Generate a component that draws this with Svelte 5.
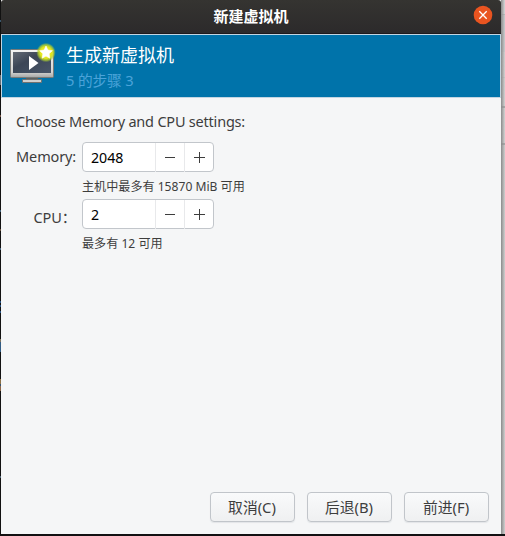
<script lang="ts">
  interface Field {
    id: string
    label: string
    value: number
    hint: string
  }

  let fields: Field[] = $state([
    { id: 'memory', label: 'Memory:', value: 2048, hint: '主机中最多有 15870 MiB 可用' },
    { id: 'cpu', label: 'CPU：', value: 2, hint: '最多有 12 可用' }
  ])

  const actions = ['取消(C)', '后退(B)', '前进(F)']

  function step(field: Field, amount: number): void {
    field.value = Math.max(1, field.value + amount)
  }
</script>

<div class="desktop">
  <div class="edge"></div>
  <div class="window">
    <div class="titlebar">
      <span></span>
      <span class="title">新建虚拟机</span>
      <button class="close" aria-label="Close">
        <svg width="20" height="20" viewBox="0 0 20 20">
          <circle cx="10" cy="10" r="9.3" fill="#e95420" />
          <path d="M6.3 6.3L13.7 13.7M13.7 6.3L6.3 13.7" stroke="#fff" stroke-width="1.3" />
        </svg>
      </button>
    </div>

    <header class="banner">
      <svg class="monitor" width="48" height="48" viewBox="0 0 48 48">
        <defs>
          <linearGradient id="bezel" x1="0" y1="0" x2="0" y2="1">
            <stop offset="0" stop-color="#f4f4f3" />
            <stop offset="0.8" stop-color="#d4d4d2" />
            <stop offset="1" stop-color="#a5a6a5" />
          </linearGradient>
          <linearGradient id="screen" x1="0" y1="0" x2="1" y2="1">
            <stop offset="0" stop-color="#646b76" />
            <stop offset="0.4" stop-color="#3c4656" />
            <stop offset="1" stop-color="#485568" />
          </linearGradient>
          <radialGradient id="glow">
            <stop offset="0" stop-color="#f6f33a" />
            <stop offset="0.6" stop-color="#e0e51c" />
            <stop offset="0.8" stop-color="#b5d22a" stop-opacity="0.75" />
            <stop offset="1" stop-color="#8cbe42" stop-opacity="0" />
          </radialGradient>
        </defs>
        <path d="M18 35H30V40H18Z" fill="#5e605f" />
        <rect x="14.5" y="37.5" width="19" height="3" rx="0.5" fill="#cfcfcd" stroke="#70716f" />
        <rect x="2.5" y="7.5" width="43" height="28" rx="1" fill="url(#bezel)" stroke="#777977" />
        <rect x="5" y="10" width="38" height="21" fill="url(#screen)" />
        <path d="M21 14L30.5 21L21 28Z" fill="#fff" />
        <circle cx="38" cy="10.5" r="9.8" fill="url(#glow)" />
        <path d="M38 4L39.9 8.1L44.3 8.7L41.1 11.8L41.9 16.2L38 14.1L34.1 16.2L34.9 11.8L31.7 8.7L36.1 8.1Z" fill="#fff" stroke="#fff" stroke-width="0.6" />
      </svg>
      <div class="heading">
        <div class="main">生成新虚拟机</div>
        <div class="sub">5 的步骤 3</div>
      </div>
    </header>

    <main>
      <p class="prompt">Choose Memory and CPU settings:</p>
      <div class="form">
        {#each fields as field (field.id)}
          <span class="label {field.id}">{field.label}</span>
          <div class="spin">
            <span class="value">{field.value}</span>
            <button aria-label="Decrease" onclick={() => step(field, -1)}>
              <svg width="12" height="12" viewBox="0 0 12 12"><path d="M1 5.5H11" stroke="#3d3d3d" /></svg>
            </button>
            <button aria-label="Increase" onclick={() => step(field, 1)}>
              <svg width="12" height="12" viewBox="0 0 12 12"><path d="M1 5.5H12M6.5 0V11" stroke="#3d3d3d" /></svg>
            </button>
          </div>
          <span class="hint {field.id}">{field.hint}</span>
        {/each}
      </div>
    </main>

    <footer>
      {#each actions as action}
        <button class="action">{action}</button>
      {/each}
    </footer>
  </div>
  <div class="behind"></div>
</div>

<style>
  :global(body) {
    margin: 0;
    background: #111;
  }

  .desktop {
    display: grid;
    grid-template-columns: 1px 500px 4px;
    width: 505px;
    height: 536px;
    overflow: hidden;
    background: #121112;
    font-family: 'Noto Sans', 'Noto Sans CJK SC', sans-serif;
    font-size: 14.5px;
    color: #3d3d3d;
  }

  button {
    padding: 0;
    border: none;
    background: none;
    font: inherit;
    color: inherit;
  }

  .edge {
    background: linear-gradient(
      #111 20px, #39566c 20px 22px, #111 22px 75px, #687078 75px 85px, #111 85px 115px,
      #765446 115px 117px, #111 117px 210px, #426077 210px 212px, #111 212px 229px,
      #66503f 229px 231px, #111 231px 248px, #46617a 248px 250px, #111 250px 301px,
      #244f80 301px 303px, #111 303px 305px, #244f80 305px 307px, #111 307px 311px,
      #244f80 311px 313px, #111 313px 339px, #7c7461 339px 342px, #315b83 342px 352px,
      #111 352px 379px, #8c7046 379px 384px, #36516c 384px 386px, #8b6548 386px 391px,
      #111 391px 476px, #4b6070 476px 478px, #111 478px
    );
  }

  .window {
    display: flex;
    flex-direction: column;
    height: 534px;
    background: #f5f6f7;
  }

  .titlebar {
    display: grid;
    grid-template-columns: 1fr auto 1fr;
    align-items: center;
    box-sizing: border-box;
    height: 34px;
    padding: 0 8px 3px;
    border-bottom: 1px solid #1d1a1d;
    border-radius: 3px 3px 0 0;
    background: linear-gradient(#353431, #2c2a2b);
  }

  .title {
    padding-top: 1px;
    font-size: 15px;
    line-height: 20px;
    font-weight: 700;
    color: #fff;
  }

  .close {
    justify-self: end;
    width: 20px;
    height: 20px;
  }

  .close svg {
    display: block;
  }

  /* ── Wizard banner ── */

  .banner {
    display: flex;
    box-sizing: border-box;
    height: 64px;
    padding-left: 6px;
    border: 1px solid #c2d5e2;
    background: #0073aa;
  }

  .monitor {
    margin-top: 7px;
  }

  .heading {
    margin-left: 10px;
    padding-top: 8px;
  }

  .main {
    font-size: 18px;
    line-height: 24px;
    color: #fff;
  }

  .sub {
    margin-top: 1px;
    font-size: 14.7px;
    letter-spacing: -0.15px;
    line-height: 24px;
    color: #4ba3d9;
  }

  /* ── Settings form ── */

  main {
    flex: 1;
    padding: 13px 15px 0;
  }

  .prompt {
    margin: 0 0 11px;
    letter-spacing: -0.21px;
    line-height: 20px;
    white-space: nowrap;
  }

  .form {
    display: grid;
    grid-template-columns: 60px 132px;
    grid-template-rows: 30px 27px 30px 27px;
    column-gap: 6px;
  }

  .label {
    justify-self: end;
    letter-spacing: -0.15px;
    line-height: 29px;
    white-space: nowrap;
  }

  .label.cpu {
    padding-top: 4px;
  }

  .spin {
    display: grid;
    grid-template-columns: 1fr 29px 29px;
    box-sizing: border-box;
    height: 30px;
    border: 1px solid #c2c6cb;
    border-radius: 4px;
    background: #fff;
  }

  .value {
    padding-left: 8px;
    font-size: 14.2px;
    line-height: 29px;
    color: #000;
  }

  .spin button {
    display: flex;
    align-items: center;
    justify-content: center;
    border-left: 1px solid #e8e9eb;
  }

  .hint {
    grid-column: 2;
    font-size: 12.1px;
    line-height: 30px;
    white-space: nowrap;
  }

  /* ── Buttons ── */

  footer {
    display: flex;
    justify-content: flex-end;
    gap: 12px;
    padding: 0 12px 12px 0;
  }

  .action {
    box-sizing: border-box;
    width: 85px;
    height: 30px;
    padding: 0 1px 2px 0;
    border: 1px solid #c1c5ca;
    border-radius: 4px;
    background: linear-gradient(#f9fafb, #eff0f1);
    box-shadow: 0 1px 1px #e3e5e7;
    font-size: 14.8px;
  }

  .behind {
    height: 534px;
    background:
      linear-gradient(90deg, #8b8b8b, transparent),
      linear-gradient(
        #d7d8d9 14px, #bbbcbd 14px 15px, #cbced0 15px 52px, #d4d4d4 52px 77px,
        #cacaca 77px 78px, #d4d4d4 78px 106px, #aaa 106px 108px, #d4d4d4 108px 143px,
        #aaa 143px 145px, #cfcfcf 145px
      );
  }
</style>
